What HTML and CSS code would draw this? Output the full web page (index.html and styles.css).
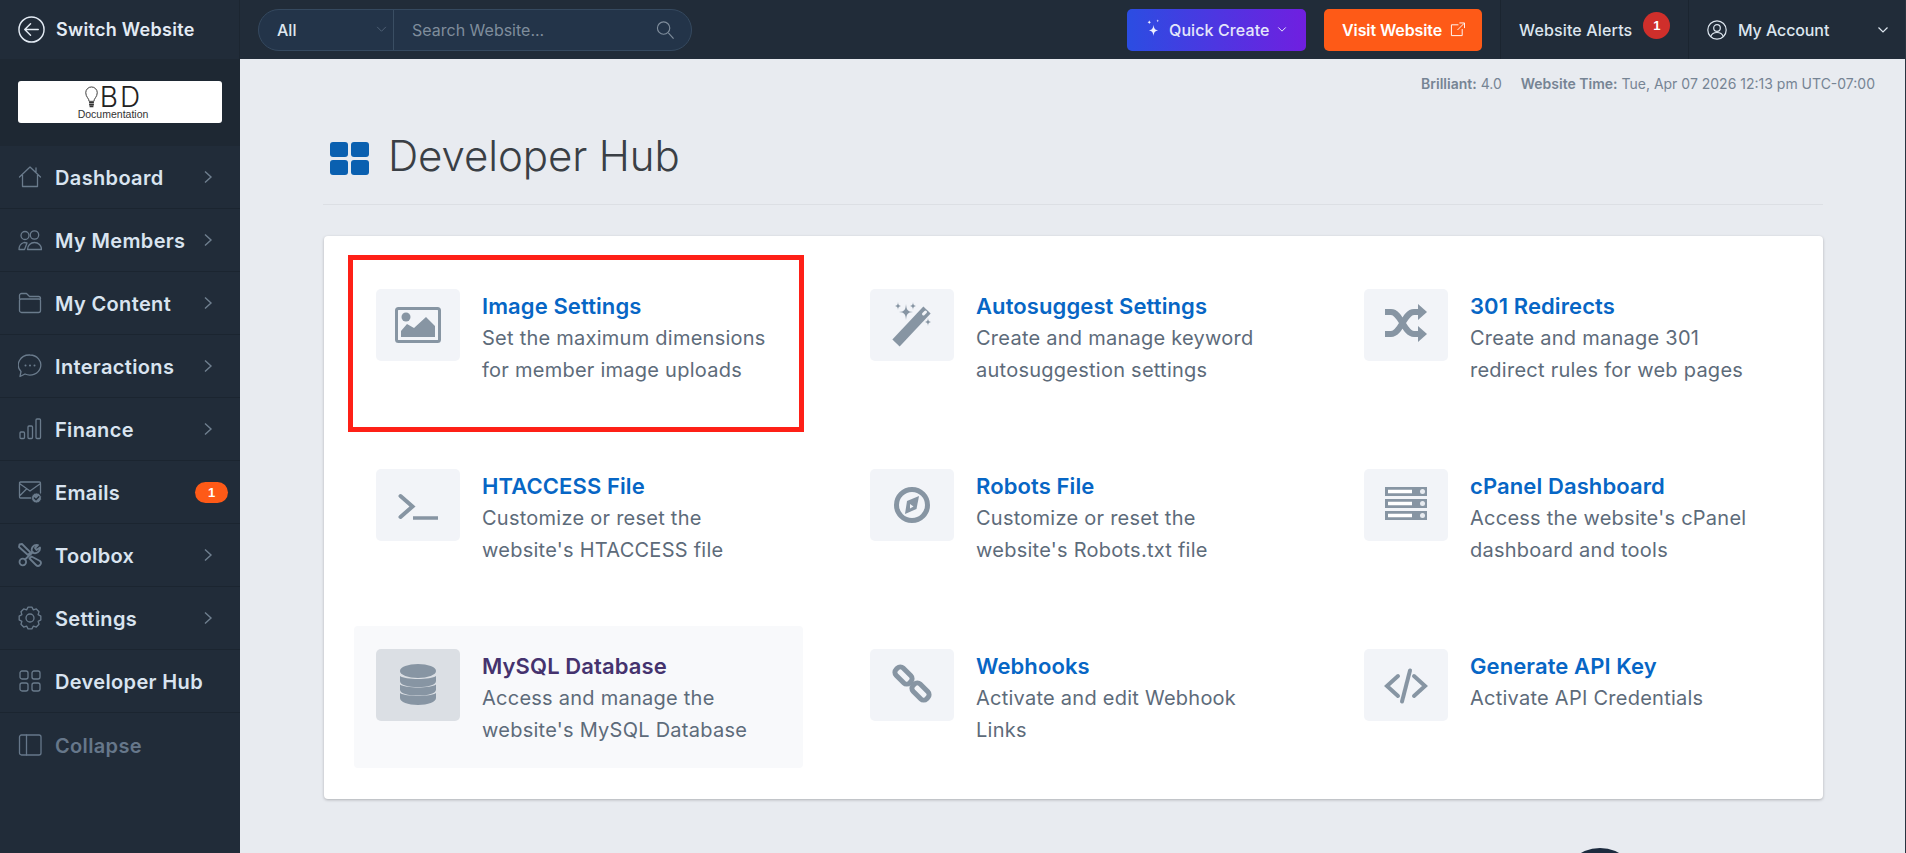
FILE: index.html
```html
<!DOCTYPE html>
<html lang="en">
<head>
<meta charset="utf-8">
<title>Developer Hub</title>
<link rel="stylesheet" href="styles.css">
</head>
<body>
<div class="app">
  <aside class="sidebar">
    <a class="switch">
      <svg class="switch-icon" viewBox="0 0 28 28"><circle cx="14" cy="14" r="13"/><path d="M21 14H7.500M13 8l-6 6 6 6"/></svg>
      <span>Switch Website</span>
    </a>
    <div class="logo-wrap">
      <div class="logo">
        <div class="logo-top">
          <svg class="bulb" viewBox="0 0 14 24"><path d="M4.500 16c0-3-3.500-4.500-3.500-9a6 6 0 0 1 12 0c0 4.500-3.500 6-3.500 9z"/><path class="bulb-base" d="M4.500 17.500h5M4.500 19.500h5M5 21.500h4"/></svg>
          <span class="logo-bd">BD</span>
        </div>
        <div class="logo-doc">Documentation</div>
      </div>
    </div>
    <nav class="nav">
      <a class="nav-item"><svg class="nav-icon" viewBox="0 0 24 24"><path d="M1.500 12 12 2l10.500 10M4.500 10v11.500h15V10M18 3v4"/></svg><span class="nav-label">Dashboard</span><svg class="nav-chev" viewBox="0 0 10 14"><path d="m2 1.500 6 5.500-6 5.500"/></svg></a>
      <a class="nav-item"><svg class="nav-icon" viewBox="0 0 24 24"><circle cx="7" cy="7.500" r="4"/><circle cx="16.500" cy="7" r="4.200"/><path d="M1 21.500c0-3 1.500-6 5-7l3 .5-2.500 6.500zM9.500 21.500c0-4 3-7 7-7s7 3 7 7z"/></svg><span class="nav-label">My Members</span><svg class="nav-chev" viewBox="0 0 10 14"><path d="m2 1.500 6 5.500-6 5.500"/></svg></a>
      <a class="nav-item"><svg class="nav-icon" viewBox="0 0 24 24"><path d="M1.500 8V4.500a2 2 0 0 1 2-2h5l3 3h9a2 2 0 0 1 2 2V8M3 8h18a1.500 1.500 0 0 1 1.500 1.500v10a2 2 0 0 1-2 2h-17a2 2 0 0 1-2-2v-10A1.500 1.500 0 0 1 3 8z"/></svg><span class="nav-label">My Content</span><svg class="nav-chev" viewBox="0 0 10 14"><path d="m2 1.500 6 5.500-6 5.500"/></svg></a>
      <a class="nav-item"><svg class="nav-icon" viewBox="0 0 24 24"><path d="M12 1a11 10 0 1 1-5 19l-5 2.500 1-5A11 10 0 0 1 12 1z"/><path class="nav-dots" d="M7.500 11.500h.01M12 11.500h.01M16.500 11.500h.01"/></svg><span class="nav-label">Interactions</span><svg class="nav-chev" viewBox="0 0 10 14"><path d="m2 1.500 6 5.500-6 5.500"/></svg></a>
      <a class="nav-item"><svg class="nav-icon" viewBox="0 0 24 24"><rect x="2" y="15" width="4.500" height="6.500" rx="1"/><rect x="10" y="9" width="4.500" height="12.500" rx="1"/><rect x="18" y="2" width="4.500" height="19.500" rx="1"/></svg><span class="nav-label">Finance</span><svg class="nav-chev" viewBox="0 0 10 14"><path d="m2 1.500 6 5.500-6 5.500"/></svg></a>
      <a class="nav-item"><svg class="nav-icon" viewBox="0 0 24 24"><path d="M14 18H2.500a1 1 0 0 1-1-1V3a1 1 0 0 1 1-1h19a1 1 0 0 1 1 1v10M1.500 3.500 12 11l10.500-7.500M1.500 16l7-7"/><circle class="nav-fill" cx="18.500" cy="18" r="5"/><path class="nav-tick" d="m16.300 18 1.700 1.700 2.800-3"/></svg><span class="nav-label">Emails</span><span class="nav-badge">1</span></a>
      <a class="nav-item"><svg class="nav-icon nav-icon-heavy" viewBox="0 0 24 24"><path d="M1.500 1.500 4 1l8.500 8.500-2.500 2.500L1 4zM13.500 13.500l-2 2 6.500 6.500a2.200 2.200 0 0 0 4-4zM7 16.500 15 9M14.500 9.500a5 5 0 0 1 5.500-7.500L17 5l1.500 2 3.500-2.500a5 5 0 0 1-7.500 5z"/><circle cx="4.800" cy="19" r="3.300"/></svg><span class="nav-label">Toolbox</span><svg class="nav-chev" viewBox="0 0 10 14"><path d="m2 1.500 6 5.500-6 5.500"/></svg></a>
      <a class="nav-item"><svg class="nav-icon" viewBox="0 0 24 24"><polygon points="10.090,1.170 13.910,1.170 15.370,3.870 18.310,2.990 21.010,5.690 20.130,8.630 22.830,10.090 22.830,13.910 20.130,15.370 21.010,18.310 18.310,21.010 15.370,20.130 13.910,22.830 10.090,22.830 8.630,20.130 5.690,21.010 2.990,18.310 3.870,15.370 1.170,13.910 1.170,10.090 3.870,8.630 2.990,5.690 5.690,2.990 8.630,3.870"/><circle cx="12" cy="12" r="4"/></svg><span class="nav-label">Settings</span><svg class="nav-chev" viewBox="0 0 10 14"><path d="m2 1.500 6 5.500-6 5.500"/></svg></a>
      <a class="nav-item"><svg class="nav-icon" viewBox="0 0 24 24"><rect x="2" y="2" width="8" height="8" rx="2"/><rect x="14" y="2" width="8" height="8" rx="2"/><rect x="2" y="14" width="8" height="8" rx="2"/><rect x="14" y="14" width="8" height="8" rx="2"/></svg><span class="nav-label">Developer Hub</span></a>
      <a class="nav-item nav-muted"><svg class="nav-icon" viewBox="0 0 24 24"><rect x="1.500" y="2" width="21.500" height="20" rx="2"/><path d="M8.500 2v20"/></svg><span class="nav-label">Collapse</span></a>
    </nav>
  </aside>

  <div class="main">
    <header class="topbar">
      <div class="search">
        <div class="search-select"><span>All</span><svg class="search-chev" viewBox="0 0 12 8"><path d="m1 1 5 5 5-5"/></svg></div>
        <div class="search-field"><span>Search Website...</span><svg class="search-icon" viewBox="0 0 20 20"><circle cx="8" cy="8" r="6.500"/><path d="m13 13 5.500 6"/></svg></div>
      </div>
      <div class="top-actions">
        <a class="btn btn-create">
          <svg class="btn-spark" viewBox="0 0 16 20"><path d="M8 6c.5 4 1.500 5.500 5 6-3.500.5-4.500 2-5 6-.5-4-1.500-5.500-5-6 3.500-.5 4.500-2 5-6zM3.500 1c.2 1.500.7 2 2 2.300-1.300.3-1.800.8-2 2.200-.2-1.400-.7-1.900-2-2.200 1.300-.3 1.800-.8 2-2.300zM12.500 0c.2 1.200.5 1.500 1.500 1.700-1 .2-1.300.5-1.500 1.700-.2-1.200-.5-1.500-1.500-1.700 1-.2 1.300-.5 1.500-1.700z"/></svg>
          <span>Quick Create</span>
          <svg class="btn-chev" viewBox="0 0 12 8"><path d="m1.500 1.500 4.500 4.500 4.500-4.500"/></svg>
        </a>
        <a class="btn btn-visit">
          <span>Visit Website</span>
          <svg class="btn-ext" viewBox="0 0 16 16"><path d="M9 3H1.500v11.500H13V7.500M8 8.500 15 1.500M10 1h5.500v5.500"/></svg>
        </a>
      </div>
      <a class="top-alerts"><span>Website Alerts</span><span class="alert-badge">1</span></a>
      <a class="top-account">
        <svg class="account-icon" viewBox="0 0 20 20"><circle cx="10" cy="10" r="9.200"/><circle cx="10" cy="8" r="3.300"/><path d="M3.800 16.500c1-3 3.300-4 6.200-4s5.200 1 6.200 4"/></svg>
        <span class="account-name">My Account</span>
        <svg class="account-chev" viewBox="0 0 12 8"><path d="m1.500 1.500 4.500 4.500 4.500-4.500"/></svg>
      </a>
    </header>

    <div class="status">
      <span><b>Brilliant:</b> 4.0</span>
      <span><b>Website Time:</b> Tue, Apr 07 2026 12:13 pm UTC-07:00</span>
    </div>

    <main class="content">
      <div class="page-head">
        <svg class="page-icon" viewBox="0 0 40 33"><rect x="0" y="0" width="18" height="15" rx="3"/><rect x="21" y="0" width="18" height="15" rx="3"/><rect x="0" y="18" width="18" height="15" rx="3"/><rect x="21" y="18" width="18" height="15" rx="3"/></svg>
        <h1 class="page-title">Developer Hub</h1>
      </div>

      <section class="card">
        <a class="tool">
          <svg class="tile" viewBox="0 0 84 72"><rect class="g-line3" x="20.500" y="19.500" width="43" height="33" rx="2"/><circle class="g-fill" cx="30" cy="28" r="4.500"/><path class="g-fill" d="M25 48v-6l6-7 7 4 12-11 9 9v11z"/></svg>
          <div class="tool-text"><h2 class="tool-title">Image Settings</h2><p class="tool-desc">Set the maximum dimensions for member image uploads</p></div>
        </a>
        <a class="tool">
          <svg class="tile" viewBox="0 0 84 72"><path class="g-wand" d="M26 54 57 21"/><path class="g-wand-gap" d="m53.500 25 2-2"/><path class="g-fill" d="M36 15c.5 6 1.500 7.500 7 8-5.500.5-6.500 2-7 8-.5-6-1.500-7.500-7-8 5.500-.5 6.500-2 7-8zM28 13c.2 2.700.7 3.400 3 4-2.300.6-2.800 1.300-3 4-.2-2.700-.7-3.400-3-4 2.300-.6 2.800-1.300 3-4zM43 13c.2 2.700.7 3.400 3 4-2.300.6-2.800 1.300-3 4-.2-2.700-.7-3.400-3-4 2.300-.6 2.800-1.300 3-4zM58 29c.2 2.700.7 3.400 3 4-2.300.6-2.800 1.300-3 4-.2-2.700-.7-3.400-3-4 2.300-.6 2.800-1.300 3-4z"/></svg>
          <div class="tool-text"><h2 class="tool-title">Autosuggest Settings</h2><p class="tool-desc">Create and manage keyword autosuggestion settings</p></div>
        </a>
        <a class="tool">
          <svg class="tile" viewBox="0 0 84 72"><path class="g-line6" d="M21 23h6c10 0 13 22 23 22h6M21 45h6c10 0 13-22 23-22h6"/><path class="g-fill" d="m54 15 9 8-9 8zM54 37l9 8-9 8z"/></svg>
          <div class="tool-text"><h2 class="tool-title">301 Redirects</h2><p class="tool-desc">Create and manage 301 redirect rules for web pages</p></div>
        </a>
        <a class="tool">
          <svg class="tile" viewBox="0 0 84 72"><path class="g-line4" d="m24.500 27 12 10.500-12 10.500"/><path class="g-line3b" d="M37 49h25"/></svg>
          <div class="tool-text"><h2 class="tool-title">HTACCESS File</h2><p class="tool-desc">Customize or reset the website's HTACCESS file</p></div>
        </a>
        <a class="tool">
          <svg class="tile" viewBox="0 0 84 72"><circle class="g-line5" cx="42" cy="36" r="15.500"/><path class="g-fill" d="m49 27-2.500 13L35 45l2-13z"/><path class="g-cut" d="m40 35 3.500 2.500L40 39.500z"/></svg>
          <div class="tool-text"><h2 class="tool-title">Robots File</h2><p class="tool-desc">Customize or reset the website's Robots.txt file</p></div>
        </a>
        <a class="tool">
          <svg class="tile" viewBox="0 0 84 72"><rect class="g-fill" x="21" y="18" width="42" height="9"/><rect class="g-fill" x="21" y="30" width="42" height="9"/><rect class="g-fill" x="21" y="42" width="42" height="9"/><path class="g-bar" d="M24 22.500h24M24 34.500h24M24 46.500h24"/><circle class="g-dot" cx="58.500" cy="22.500" r="2.500"/><circle class="g-dot" cx="58.500" cy="34.500" r="2.500"/><circle class="g-dot" cx="58.500" cy="46.500" r="2.500"/></svg>
          <div class="tool-text"><h2 class="tool-title">cPanel Dashboard</h2><p class="tool-desc">Access the website's cPanel dashboard and tools</p></div>
        </a>
        <a class="tool tool-hover">
          <svg class="tile" viewBox="0 0 84 72"><ellipse class="g-fill" cx="42" cy="22" rx="18" ry="7"/><path class="g-fill" d="M24 27c5 4 31 4 36 0v5c0 4-8 6-18 6s-18-2-18-6zM24 35.500c5 4 31 4 36 0v5c0 4-8 6-18 6s-18-2-18-6zM24 44c5 4 31 4 36 0v5c0 4-8 7-18 7s-18-3-18-7z"/></svg>
          <div class="tool-text"><h2 class="tool-title">MySQL Database</h2><p class="tool-desc">Access and manage the website's MySQL Database</p></div>
        </a>
        <a class="tool">
          <svg class="tile" viewBox="0 0 84 72"><rect class="g-line5" x="24" y="21.500" width="19" height="10" rx="4" transform="rotate(45 33.500 26.500)"/><rect class="g-line5" x="41" y="37.500" width="19" height="10" rx="4" transform="rotate(45 50.500 42.500)"/></svg>
          <div class="tool-text"><h2 class="tool-title">Webhooks</h2><p class="tool-desc">Activate and edit Webhook Links</p></div>
        </a>
        <a class="tool">
          <svg class="tile" viewBox="0 0 84 72"><path class="g-line4" d="M34 27 23 37l11 10M50 27l11 10-11 10"/><path class="g-line4" d="m46 21.500-8 31"/></svg>
          <div class="tool-text"><h2 class="tool-title">Generate API Key</h2><p class="tool-desc">Activate API Credentials</p></div>
        </a>
        <div class="marker"></div>
      </section>
    </main>
  </div>
</div>
<div class="float-btn"></div>
</body>
</html>
```
FILE: styles.css
```css
* { box-sizing: border-box; }
html, body { margin: 0; height: 100%; overflow: hidden; }
body {
  font-family: Inter, "Open Sans", sans-serif;
  background: #e8ebf0;
  color: #5d6b7a;
}
svg { display: block; flex: none; fill: none; }
a { color: inherit; text-decoration: none; }
h1, h2, p { margin: 0; }

.app { display: flex; height: 853px; border-right: 1px solid #2a3440; }

/* Sidebar */
.sidebar { width: 240px; flex: none; background: #212c39; display: flex; flex-direction: column; }
.switch {
  height: 59px; display: flex; align-items: center; gap: 11px; padding-left: 18px;
  color: #e3ebf4; font-size: 18px; font-weight: 600; letter-spacing: .3px;
  border-right: 1px solid #1c2631;
}
.switch-icon { width: 27px; height: 27px; stroke: #e3ebf4; stroke-width: 1.500; stroke-linecap: round; stroke-linejoin: round; }
.logo-wrap { background: #1e2833; height: 87px; padding: 22px 18px 0; }
.logo {
  width: 204px; height: 42px; padding-right: 14px; background: #fff; border-radius: 3px;
  display: flex; flex-direction: column; align-items: center; color: #222;
}
.logo-top { display: flex; align-items: center; height: 24px; margin-top: 4px; }
.bulb { width: 15px; height: 23px; stroke: #333; stroke-width: 1; }
.bulb-base { stroke-width: 1.600; }
.logo-bd { font-family: Inter, sans-serif; font-size: 28px; line-height: 24px; font-weight: 300; letter-spacing: 2px; margin-left: 1px; }
.logo-doc { font-family: "Liberation Sans", sans-serif; font-size: 10.500px; line-height: 10px; color: #333; }

.nav { display: flex; flex-direction: column; }
.nav-item {
  height: 63px; display: flex; align-items: center; padding: 0 10px 0 18px;
  color: #d9e4f0; font-size: 20px; font-weight: 600; letter-spacing: .35px;
  border-bottom: 1px solid #1b2530;
}
.nav-item:last-child { border-bottom: 0; }
.nav-icon { width: 24px; height: 24px; stroke: #6a7b8c; stroke-width: 1.300; stroke-linejoin: round; stroke-linecap: round; }
.nav-icon-heavy { stroke-width: 1.800; }
.nav-dots { stroke-width: 2; }
.nav-fill { fill: #6a7b8c; stroke: #212c39; stroke-width: .8; }
.nav-tick { stroke: #212c39; stroke-width: 1.300; }
.nav-label { margin: 2px 0 0 13px; flex: 1; white-space: nowrap; }
.nav-chev { width: 10px; height: 14px; margin-right: 17px; stroke: #6f7f8f; stroke-width: 1.400; }
.nav-badge {
  width: 33px; height: 21px; border-radius: 11px; background: #fe5a17; color: #fff;
  font-family: "Liberation Sans", sans-serif; font-size: 13px; font-weight: 700; letter-spacing: 0;
  display: flex; align-items: center; justify-content: center; margin-right: 2px;
}
.nav-muted { color: #66778a; }
.nav-muted .nav-icon { stroke: #66778a; }

/* Top bar */
.main { flex: 1; min-width: 0; display: flex; flex-direction: column; }
.topbar { height: 59px; background: #212c39; display: flex; align-items: center; flex: none; }
.search {
  width: 434px; height: 42px; margin-left: 18px; display: flex;
  background: #233449; border: 1px solid #35495f; border-radius: 21px; font-size: 16px;
}
.search-select {
  width: 135px; flex: none; display: flex; align-items: center; justify-content: space-between;
  padding: 0 6px 0 18px; color: #dfe7ef; font-weight: 500; border-right: 1px solid #3a4e63;
}
.search-chev { width: 11px; height: 7px; stroke: #55677a; stroke-width: 1; }
.search-field { flex: 1; display: flex; align-items: center; justify-content: space-between; padding: 0 16px 0 18px; color: #7f8d9c; }
.search-icon { width: 19px; height: 20px; stroke: #7f8d9c; stroke-width: 1.200; }
.top-actions { display: flex; gap: 18px; margin-left: auto; }
.btn { height: 42px; display: flex; align-items: center; border-radius: 5px; color: #fff; font-size: 16px; font-weight: 600; letter-spacing: -.1px; }
.btn-create { width: 179px; padding-left: 19px; background: linear-gradient(90deg, #2b4de2, #701fe0); color: #e4e6fa; font-weight: 500; letter-spacing: .1px; }
.btn-spark { width: 15px; height: 19px; fill: #eef0ff; margin-right: 8px; margin-top: -2px; }
.btn-chev { width: 10px; height: 7px; stroke: #e4e6fa; stroke-width: 1.200; margin-left: 7px; margin-top: -1px; }
.btn-visit { width: 158px; padding-left: 18px; background: #fe5a17; }
.btn-ext { width: 15px; height: 15px; margin-left: 8px; stroke: #fff; stroke-width: 1; }
.top-alerts {
  height: 59px; width: 189px; margin-left: 18px; padding-left: 18px;
  display: flex; align-items: center; color: #dde6ef; font-size: 16px; font-weight: 500; letter-spacing: .15px;
  border-left: 1px solid #1b2530; border-right: 1px solid #1b2530;
}
.alert-badge {
  width: 27px; height: 27px; border-radius: 50%; background: #cf2f2b; color: #fff; margin: -8px 0 0 11px;
  font-family: "Liberation Sans", sans-serif; font-size: 13px; font-weight: 700;
  display: flex; align-items: center; justify-content: center;
}
.top-account { width: 216px; flex: none; display: flex; align-items: center; padding-left: 18px; color: #dde6ef; font-size: 16px; font-weight: 500; letter-spacing: -.1px; }
.account-icon { width: 20px; height: 20px; stroke: #dde6ef; stroke-width: 1.200; }
.account-name { margin-left: 11px; }
.account-chev { width: 12px; height: 8px; margin-left: auto; margin-right: 16px; stroke: #dde6ef; stroke-width: 1.200; }

/* Status line */
.status {
  display: flex; justify-content: flex-end; gap: 19px; height: 47px; padding: 16px 30px 0 0;
  font-size: 14px; line-height: 17px; color: #768494; letter-spacing: 0;
}
.status b { font-weight: 600; }

/* Content */
.content { padding: 0 0 0 83px; }
.page-head {
  width: 1500px; height: 99px; display: flex; align-items: flex-start; gap: 18px;
  padding: 36px 0 0 7px; border-bottom: 1px solid #dcdfe4;
}
.page-icon { width: 40px; height: 33px; fill: #0a60b0; }
.page-title { font-size: 42px; line-height: 36px; font-weight: 300; color: #3a3f45; letter-spacing: -.1px; margin-top: -4px; }

.card {
  position: relative; width: 1499px; margin: 31px 0 0 1px; padding: 30px 31px 31px 30px;
  background: #fff; border-radius: 4px; box-shadow: 0 1px 3px rgba(0, 0, 0, .25);
  display: grid; grid-template-columns: repeat(3, 449px); grid-auto-rows: 142px; column-gap: 45px; row-gap: 38px;
}
.tool { display: flex; gap: 22px; padding: 23px 22px; border-radius: 4px; }
.tool-hover { background: #f8f9fb; }
.tile { width: 84px; height: 72px; background: #f2f4f8; border-radius: 5px; }
.tool-hover .tile { background: #dbdfe4; }
.tool-text { padding-top: 3px; min-width: 0; }
.tool-title { font-size: 22px; line-height: 28px; font-weight: 600; color: #0766c5; letter-spacing: .1px; }
.tool-hover .tool-title { color: #45336e; }
.tool-desc { font-size: 20px; line-height: 32px; font-weight: 400; color: #5d6b7a; margin-top: 2px; max-width: 300px; letter-spacing: .25px; }

.g-fill { fill: #8795a3; }
.g-line3 { stroke: #8795a3; stroke-width: 3; }
.g-line3b { stroke: #8795a3; stroke-width: 3.500; }
.g-line4 { stroke: #8795a3; stroke-width: 4; stroke-linecap: round; }
.g-line5 { stroke: #8795a3; stroke-width: 5; }
.g-line6 { stroke: #8795a3; stroke-width: 6; }
.g-wand { stroke: #8795a3; stroke-width: 10; stroke-linecap: butt; }
.g-wand-gap { stroke: #f2f4f8; stroke-width: 3; stroke-linecap: round; }
.g-cut { fill: #f2f4f8; }
.g-bar { stroke: #fff; stroke-width: 3.500; }
.g-dot { fill: #e8ebf0; }

.marker { position: absolute; left: 24px; top: 19px; width: 456px; height: 177px; border: 5px solid #fe2017; pointer-events: none; }
.float-btn { position: fixed; left: 1560px; bottom: -75px; width: 80px; height: 80px; border-radius: 50%; background: #1c2b3e; }
```
